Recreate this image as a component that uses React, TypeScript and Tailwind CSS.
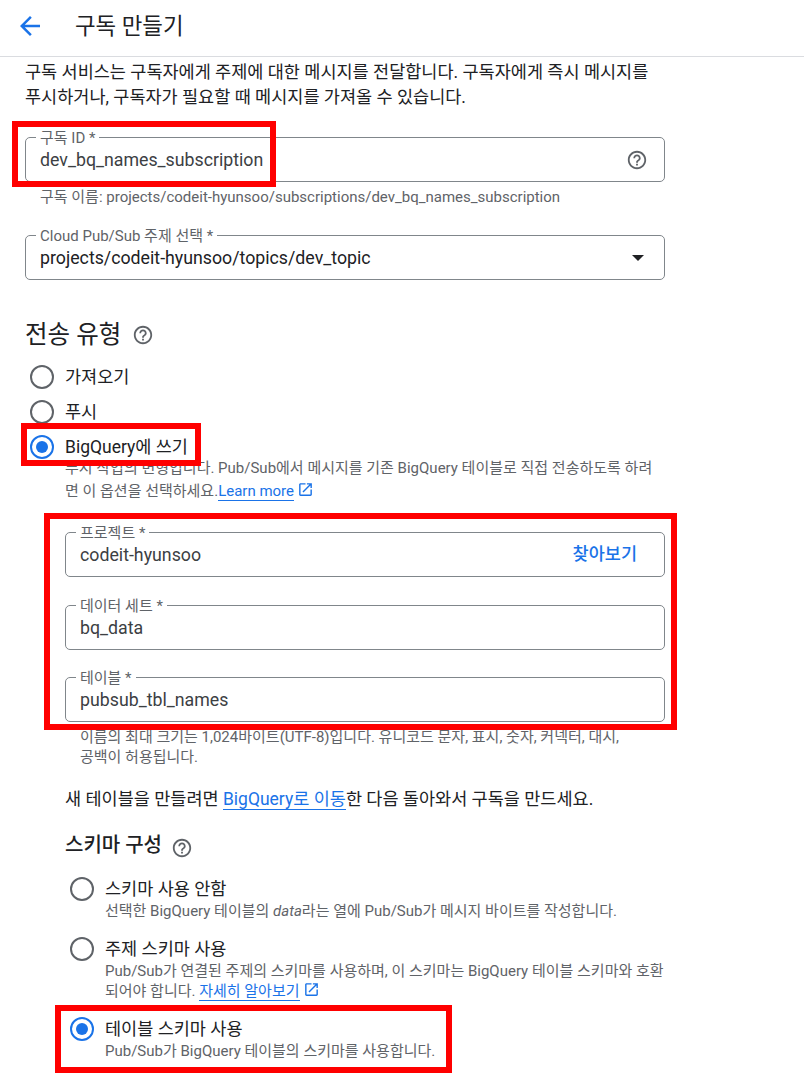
const FONT = "font-['Roboto','Noto_Sans_CJK_KR',sans-serif]";

const HelpIcon = ({ className = '' }: { className?: string }) => (
  <svg viewBox="0 0 24 24" className={`h-[22px] w-[22px] fill-[#5f6368] ${className}`}>
    <path d="M11 18h2v-2h-2v2zm1-16C6.48 2 2 6.48 2 12s4.48 10 10 10 10-4.48 10-10S17.52 2 12 2zm0 18c-4.41 0-8-3.59-8-8s3.59-8 8-8 8 3.59 8 8-3.59 8-8 8zm0-14c-2.21 0-4 1.79-4 4h2c0-1.1.9-2 2-2s2 .9 2 2c0 2-3 1.75-3 5h2c0-2.25 3-2.5 3-5 0-2.21-1.79-4-4-4z" />
  </svg>
);

const OpenIcon = () => (
  <svg viewBox="0 0 24 24" className="ml-[3px] inline-block h-[17px] w-[17px] fill-[#1a73e8] align-[-2px]">
    <path d="M19 19H5V5h7V3H5c-1.11 0-2 .9-2 2v14c0 1.1.89 2 2 2h14c1.1 0 2-.9 2-2v-7h-2v7zM14 3v2h3.59l-9.83 9.83 1.41 1.41L19 6.41V10h2V3h-7z" />
  </svg>
);

const Radio = ({ checked = false }: { checked?: boolean }) => (
  <span
    className={`flex h-[24px] w-[24px] shrink-0 items-center justify-center rounded-full border-2 ${
      checked ? 'border-[#1a73e8]' : 'border-[#5f6368]'
    }`}
  >
    {checked && <span className="h-[12px] w-[12px] rounded-full bg-[#1a73e8]" />}
  </span>
);

const Field = ({
  label,
  value,
  dark = false,
  children,
}: {
  label: string;
  value: string;
  dark?: boolean;
  children?: React.ReactNode;
}) => (
  <div className="relative flex h-[45px] items-center justify-between rounded-[5px] border border-[#80868b] pl-[14px] pr-[16px]">
    <span className="absolute left-[10px] top-[-9px] bg-white px-[4px] text-[15px] leading-[18px] text-[#5f6368]">{label}</span>
    <span className={`pt-[1px] text-[17.75px] leading-[24px] ${dark ? 'text-[#202124]' : 'text-[#3c4043]'}`}>{value}</span>
    {children}
  </div>
);

const Link = ({ children }: { children: React.ReactNode }) => (
  <span className="border-b border-[#1a73e8] text-[#1a73e8]">{children}</span>
);

const SchemaOption = ({
  title,
  checked,
  className = '',
  children,
}: {
  title: string;
  checked?: boolean;
  className?: string;
  children: React.ReactNode;
}) => (
  <div className={`flex gap-[11px] pl-[5px] ${className}`}>
    <Radio checked={checked} />
    <div className="w-[560px]">
      <div className="text-[17.5px] leading-[24px] text-[#202124]">{title}</div>
      <div className="text-[15px] leading-[20px] text-[#5f6368]">{children}</div>
    </div>
  </div>
);

export default function App() {
  return (
    <div className={`relative h-[1080px] w-[804px] overflow-hidden bg-white ${FONT}`}>
      {/* Top bar */}
      <header className="flex h-[57px] items-center border-b border-[#dadce0] pb-[4px]">
        <svg viewBox="0 0 24 24" className="ml-[15px] h-[30px] w-[30px] fill-[#1a73e8]">
          <path d="M20 11H7.83l5.59-5.59L12 4l-8 8 8 8 1.41-1.41L7.83 13H20v-2z" />
        </svg>
        <h1 className="ml-[30px] text-[22.4px] font-normal leading-[28px] text-[#202124]">구독 만들기</h1>
      </header>

      <main className="w-[665px] pl-[25px]">
        <p className="mt-[3px] text-[17.5px] leading-[25px] text-[#202124]">
          구독 서비스는 구독자에게 주제에 대한 메시지를 전달합니다. 구독자에게 즉시 메시지를 푸시하거나, 구독자가 필요할 때 메시지를 가져올 수 있습니다.
        </p>

        <div className="mt-[27px]">
          <Field label="구독 ID *" value="dev_bq_names_subscription">
            <HelpIcon />
          </Field>
          <div className="mt-[5px] pl-[15px] text-[15px] leading-[20px] text-[#5f6368]">
            구독 이름: projects/codeit-hyunsoo/subscriptions/dev_bq_names_subscription
          </div>
        </div>

        <div className="mt-[28px]">
          <Field label="Cloud Pub/Sub 주제 선택 *" value="projects/codeit-hyunsoo/topics/dev_topic" dark>
            <span className="mr-[4px] h-0 w-0 border-x-[6px] border-t-[6px] border-x-transparent border-t-[#202124]" />
          </Field>
        </div>

        {/* Delivery type */}
        <div className="mt-[37px] flex h-[36px] items-center gap-[11px]">
          <h2 className="text-[24.5px] font-normal leading-[32px] text-[#202124]">전송 유형</h2>
          <HelpIcon />
        </div>

        <div className="mt-[12px] flex flex-col gap-[11px] pl-[5px]">
          <div className="flex h-[24px] items-center gap-[11px] text-[17.5px] text-[#202124]">
            <Radio />
            가져오기
          </div>
          <div className="flex h-[24px] items-center gap-[11px] text-[17.5px] text-[#202124]">
            <Radio />
            푸시
          </div>
          <div className="flex h-[24px] items-center gap-[11px] text-[17.5px] text-[#202124]">
            <Radio checked />
            BigQuery에 쓰기
          </div>
        </div>

        <div className="mt-[-2px] pl-[40px] pr-[8px]">
          <p className="text-[15px] leading-[23px] text-[#5f6368]">
            푸시 작업의 변형입니다. Pub/Sub에서 메시지를 기존 BigQuery 테이블로 직접 전송하도록 하려면 이 옵션을 선택하세요.
            <Link>Learn more</Link>
            <OpenIcon />
          </p>
        </div>

        <div className="mt-[29px] pl-[40px]">
          <Field label="프로젝트 *" value="codeit-hyunsoo">
            <span className="mr-[11px] text-[17.5px] font-medium text-[#1a73e8]">찾아보기</span>
          </Field>
          <div className="mt-[28px]">
            <Field label="데이터 세트 *" value="bq_data" />
          </div>
          <div className="mt-[27px]">
            <Field label="테이블 *" value="pubsub_tbl_names" />
          </div>
          <p className="mt-[5px] pl-[15px] pr-[30px] text-[15px] leading-[20px] text-[#5f6368]">
            이름의 최대 크기는 1,024바이트(UTF-8)입니다. 유니코드 문자, 표시, 숫자, 커넥터, 대시, 공백이 허용됩니다.
          </p>
          <p className="mt-[20px] text-[17.5px] leading-[24px] text-[#202124]">
            새 테이블을 만들려면 <Link>BigQuery로 이동</Link>한 다음 돌아와서 구독을 만드세요.
          </p>

          <div className="mt-[21px] flex h-[26px] items-center gap-[9px]">
            <h3 className="text-[20px] font-medium leading-[24px] text-[#202124]">스키마 구성</h3>
            <HelpIcon className="mt-[5px]" />
          </div>

          <SchemaOption title="스키마 사용 안함" className="mt-[19px]">
            선택한 BigQuery 테이블의 <i>data</i>라는 열에 Pub/Sub가 메시지 바이트를 작성합니다.
          </SchemaOption>
          <SchemaOption title="주제 스키마 사용" className="mt-[16px]">
            Pub/Sub가 연결된 주제의 스키마를 사용하며, 이 스키마는 BigQuery 테이블 스키마와 호환되어야 합니다. <Link>자세히 알아보기</Link>
            <OpenIcon />
          </SchemaOption>
          <SchemaOption title="테이블 스키마 사용" checked className="mt-[16px]">
            Pub/Sub가 BigQuery 테이블의 스키마를 사용합니다.
          </SchemaOption>
        </div>
      </main>

      {/* Red annotation boxes drawn over the screenshot */}
      <div className="absolute left-[12px] top-[121px] h-[66px] w-[264px] border-[6px] border-[#ff0000]" />
      <div className="absolute left-[21px] top-[423px] h-[43px] w-[180px] border-[6px] border-[#ff0000]" />
      <div className="absolute left-[44px] top-[513px] h-[217px] w-[633px] border-[6px] border-[#ff0000]" />
      <div className="absolute left-[55px] top-[1005px] h-[68px] w-[397px] border-[6px] border-[#ff0000]" />
    </div>
  );
}
